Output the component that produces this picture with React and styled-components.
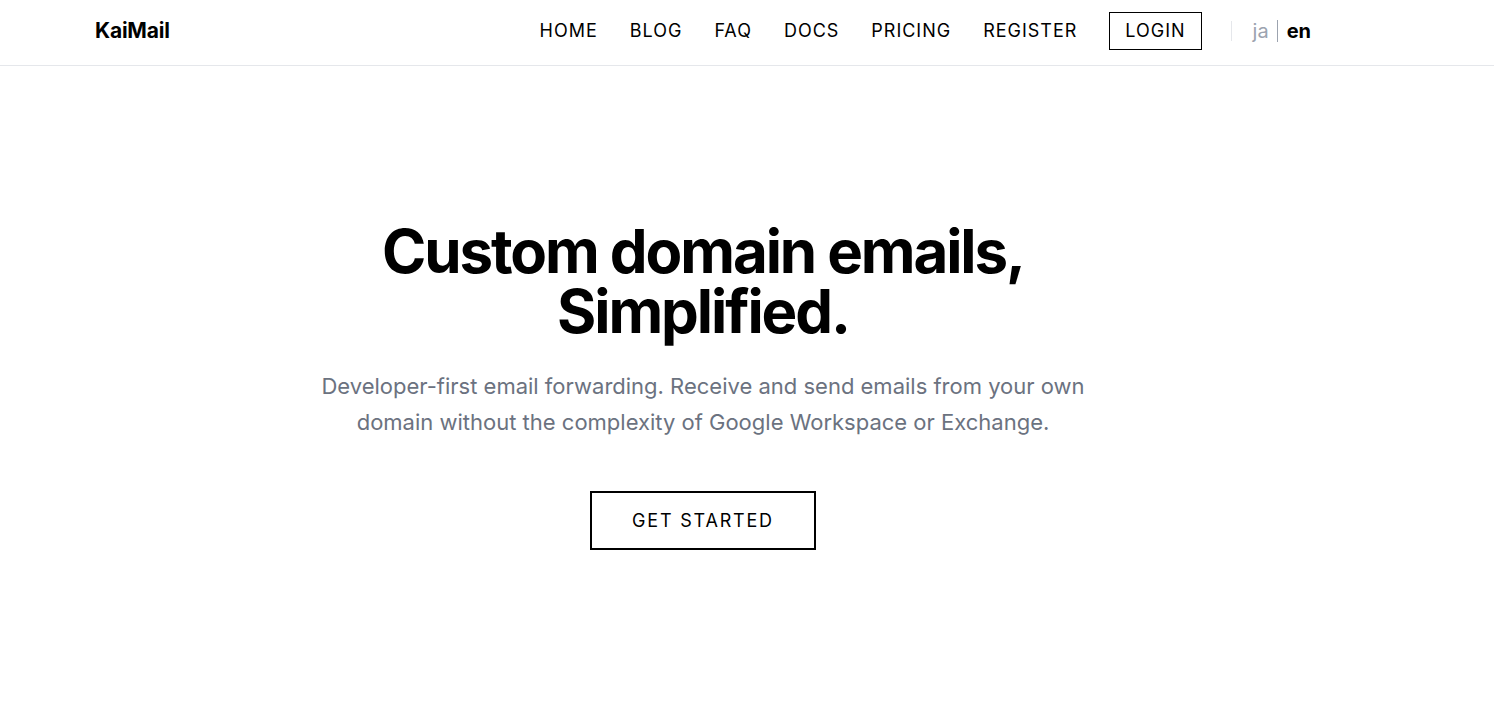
import React from 'react';
import styled, { createGlobalStyle } from 'styled-components';

const GlobalStyle = createGlobalStyle`
  html, body {
    margin: 0;
    padding: 0;
    background: #ffffff;
  }
  body {
    font-family: Inter, "Noto Sans", "Liberation Sans", sans-serif;
    color: #000000;
    -webkit-font-smoothing: antialiased;
  }
  * {
    box-sizing: border-box;
  }
`;

const Header = styled.header`
  height: 66px;
  border-bottom: 1px solid #e5e7eb;
  background: #ffffff;
`;

// content is laid out inside a 1406px frame, centred container like max-w-7xl
const Frame = styled.div`
  width: 1406px;
  height: ${({ full }) => (full ? '100%' : 'auto')};
`;

const Container = styled.div`
  max-width: 1280px;
  margin: 0 auto;
  padding: 0 32px 4px;
  height: 100%;
  display: flex;
  align-items: center;
  justify-content: space-between;
`;

const Logo = styled.a`
  font-size: 21px;
  font-weight: 700;
  letter-spacing: -0.01em;
  color: #000000;
  text-decoration: none;
`;

const Nav = styled.nav`
  display: flex;
  align-items: center;
`;

const NavLinks = styled.ul`
  display: flex;
  align-items: center;
  gap: 32px;
  margin: 0;
  padding: 0;
  list-style: none;
`;

const NavLink = styled.a`
  font-size: 18px;
  letter-spacing: 0.055em;
  color: #000000;
  text-decoration: none;
  line-height: 26px;
  ${({ boxed }) => boxed && `
    display: block;
    border: 1px solid #000000;
    padding: 5px 15px;
  `}
`;

const LangSwitch = styled.div`
  display: flex;
  align-items: center;
  margin-left: 29px;
`;

const Divider = styled.span`
  display: block;
  width: 1px;
  height: ${({ tall }) => (tall ? '22px' : '20px')};
  background: ${({ dark }) => (dark ? '#9ca3af' : '#e5e7eb')};
  margin: ${({ dark }) => (dark ? '0 9px 0 8px' : '0 21px 0 0')};
`;

const Lang = styled.a`
  font-size: 20px;
  line-height: 26px;
  text-decoration: none;
  color: ${({ active }) => (active ? '#000000' : '#9ca3af')};
  font-weight: ${({ active }) => (active ? 700 : 400)};
`;

const Hero = styled.main`
  min-height: 638px;
  display: flex;
  flex-direction: column;
  align-items: center;
  justify-content: center;
  text-align: center;
`;

const Title = styled.h1`
  margin: 0;
  font-size: 60px;
  line-height: 1;
  font-weight: 700;
  letter-spacing: -0.035em;
  color: #000000;
`;

const Lead = styled.p`
  margin: 27px 0 0;
  max-width: 780px;
  font-size: 22px;
  line-height: 36px;
  color: #6b7280;
`;

const CtaButton = styled.a`
  margin-top: 51px;
  display: inline-block;
  border: 2px solid #000000;
  padding: 15px 40px 14px;
  font-size: 18px;
  line-height: 26px;
  letter-spacing: 0.1em;
  color: #000000;
  text-decoration: none;
`;

const links = ['HOME', 'BLOG', 'FAQ', 'DOCS', 'PRICING', 'REGISTER'];

export default function App() {
  return (
    <>
      <GlobalStyle />
      <Header>
        <Frame full>
          <Container>
            <Logo href="#">KaiMail</Logo>
            <Nav>
              <NavLinks>
                {links.map((l) => (
                  <li key={l}>
                    <NavLink href="#">{l}</NavLink>
                  </li>
                ))}
                <li>
                  <NavLink href="#" boxed>LOGIN</NavLink>
                </li>
              </NavLinks>
              <LangSwitch>
                <Divider />
                <Lang href="#">ja</Lang>
                <Divider dark tall />
                <Lang href="#" active>en</Lang>
              </LangSwitch>
            </Nav>
          </Container>
        </Frame>
      </Header>
      <Frame>
        <Hero>
          <Title>
            Custom domain emails,
            <br />
            Simplified.
          </Title>
          <Lead>
            Developer-first email forwarding. Receive and send emails from your own
            domain without the complexity of Google Workspace or Exchange.
          </Lead>
          <CtaButton href="#">GET STARTED</CtaButton>
        </Hero>
      </Frame>
    </>
  );
}
